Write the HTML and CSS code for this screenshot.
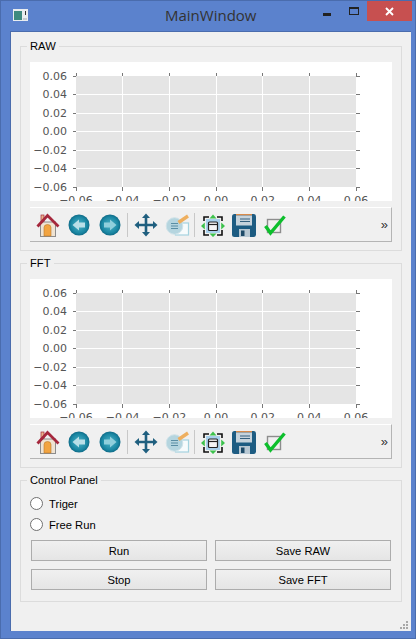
FILE: index.html
```html
<!DOCTYPE html>
<html lang="en">
<head>
    <meta charset="UTF-8">
    <meta name="viewport" content="width=device-width, initial-scale=1.0">
    <title>MainWindow</title>
    <link rel="stylesheet" href="styles.css">
</head>
<body>

<!-- Shared toolbar icons, 24x24 -->
<svg class="icon-defs" aria-hidden="true">
    <defs>
        <radialGradient id="ball" cx="0.5" cy="0.5" r="0.55">
            <stop offset="0" stop-color="#4fb4c8"/>
            <stop offset="0.7" stop-color="#1a87a3"/>
            <stop offset="1" stop-color="#0b5f7c"/>
        </radialGradient>
        <symbol id="i-home" viewBox="0 0 24 24">
            <rect x="5" y="2" width="3" height="8" fill="#e8b48c" stroke="#a8283a" stroke-width="0.7"/>
            <rect x="4.5" y="9" width="15" height="14.5" fill="#efe3d2" stroke="#8c8c8c"/>
            <path d="M8 23V14.5a3.5 3 0 0 1 7 0V23z" fill="#f2a440" stroke="#b87a2c" stroke-width="0.6"/>
            <path d="M1.5 13.5L11.5 2.5L22.5 13.5" fill="none" stroke="#a5273c" stroke-width="2.8"/>
        </symbol>
        <symbol id="i-back" viewBox="0 0 24 24">
            <circle cx="12" cy="12" r="10.5" fill="url(#ball)"/>
            <path d="M5.5 12L12 6.5V9.5H18V14.5H12V17.5z" fill="#b9dfe8"/>
        </symbol>
        <symbol id="i-forward" viewBox="0 0 24 24">
            <circle cx="12" cy="12" r="10.5" fill="url(#ball)"/>
            <path d="M18.5 12L12 6.5V9.5H6V14.5H12V17.5z" fill="#8fcfdc"/>
        </symbol>
        <symbol id="i-move" viewBox="0 0 24 24">
            <path d="M12 3V21M3 12H21" stroke="#1f5f7f" stroke-width="2.6" fill="none"/>
            <path d="M12 0.5L16 5H8zM12 23.5L16 19H8zM0.5 12L5 8V16zM23.5 12L19 8V16z" fill="#1f5f7f"/>
        </symbol>
        <symbol id="i-options" viewBox="0 0 26 24">
            <rect x="11.5" y="10" width="13" height="12" fill="#f7fbfc" stroke="#a5d3df" stroke-width="1.2"/>
            <circle cx="10.5" cy="13" r="8.3" fill="#b5d5df" stroke="#d0e3e9"/>
            <path d="M7 10.5H14M7 13H14M7 15.5H14" stroke="#5a8ea4" stroke-width="1.2"/>
            <path d="M14.5 9.5L24 3" stroke="#eeaf5f" stroke-width="3.4"/>
        </symbol>
        <symbol id="i-subplots" viewBox="0 0 24 24">
            <rect x="5" y="6" width="14" height="14" fill="#a8d0ec"/>
            <path d="M3 8V4H8M16 4H21V8M21 17V22H16M8 22H3V17" fill="none" stroke="#111" stroke-width="1.6"/>
            <rect x="7.5" y="9" width="9" height="8.5" rx="1" fill="#f4f4f4" stroke="#222" stroke-width="1.2"/>
            <path d="M8 11.5H16" stroke="#222" stroke-width="1.2"/>
            <path d="M12 1.5L15.5 5.5H8.5zM12 24L15.5 20.5H8.5zM0 13L3.8 9.5V16.5zM24 13L20.2 9.5V16.5z" fill="#3cc24c"/>
        </symbol>
        <symbol id="i-save" viewBox="0 0 24 24">
            <rect y="1" width="24" height="23" rx="2.5" fill="#1d5c82"/>
            <rect x="4" y="1" width="16" height="1.5" fill="#d98a4a"/>
            <rect x="4" y="2.5" width="16" height="10" fill="#c6d3dc"/>
            <path d="M8 6H18M8 8.5H18" stroke="#34607e" stroke-width="1.2"/>
            <rect x="7" y="16" width="11" height="8" fill="#b8c8d3"/>
            <rect x="9" y="17.5" width="3.5" height="5.5" fill="#1d4a68"/>
        </symbol>
        <symbol id="i-check" viewBox="0 0 24 24">
            <rect x="4.5" y="6.5" width="13" height="13" fill="#f0f0f0" stroke="#8d8d8d" stroke-width="1.4"/>
            <path d="M2.5 13L7.5 20L21.5 3.5" fill="none" stroke="#0dbf2c" stroke-width="3.4"/>
        </symbol>
    </defs>
</svg>

<div class="window">
    <!-- Title bar -->
    <header class="titlebar">
        <svg class="app-icon" viewBox="0 0 15 12" aria-hidden="true">
            <rect width="15" height="12" fill="#e9edf0"/>
            <rect x="1" y="2" width="8" height="9" fill="#3d8a80"/>
            <rect x="10" y="9" width="4" height="2" fill="#c4cad0"/>
            <rect x="12" y="2" width="1" height="4" fill="#333"/>
        </svg>
        <h1 class="title">MainWindow</h1>
        <span class="win-min"></span>
        <span class="win-max"></span>
        <span class="win-close">
            <svg viewBox="0 0 9 9" aria-hidden="true"><path d="M1 1L8 8M8 1L1 8" stroke="#fff" stroke-width="1.9"/></svg>
        </span>
    </header>

    <main class="content">
        <fieldset class="group plot-group">
            <legend>RAW</legend>
            <svg class="plot" viewBox="0 0 362 139" role="img" aria-label="RAW plot">
                <rect x="46" y="14" width="280" height="111" fill="#e5e5e5"/>
                <path class="grid" d="M92.5 14V125M139.5 14V125M186.5 14V125M232.5 14V125M279.5 14V125M46 32.5H326M46 51.5H326M46 69.5H326M46 88.5H326M46 106.5H326"/>
                <path class="ticks" d="M46 10.5V14M92.5 10.5V14M139.5 10.5V14M186.5 10.5V14M232.5 10.5V14M279.5 10.5V14M326 10.5V14M46 125V128.5M92.5 125V128.5M139.5 125V128.5M186.5 125V128.5M232.5 125V128.5M279.5 125V128.5M326 125V128.5M42.5 14H46M42.5 32.5H46M42.5 51.5H46M42.5 69.5H46M42.5 88.5H46M42.5 106.5H46M42.5 125H46M326 14H329.5M326 32.5H329.5M326 51.5H329.5M326 69.5H329.5M326 88.5H329.5M326 106.5H329.5M326 125H329.5"/>
                <g class="ylabels">
                    <text x="37" y="17.5">0.06</text>
                    <text x="37" y="36">0.04</text>
                    <text x="37" y="54.5">0.02</text>
                    <text x="37" y="73">0.00</text>
                    <text x="37" y="91.5">−0.02</text>
                    <text x="37" y="110">−0.04</text>
                    <text x="37" y="128.5">−0.06</text>
                </g>
                <g class="xlabels">
                    <text x="46" y="142">−0.06</text>
                    <text x="92.7" y="142">−0.04</text>
                    <text x="139.3" y="142">−0.02</text>
                    <text x="186" y="142">0.00</text>
                    <text x="232.7" y="142">0.02</text>
                    <text x="279.3" y="142">0.04</text>
                    <text x="326" y="142">0.06</text>
                </g>
            </svg>
            <div class="toolbar">
                <span class="tool"><svg><use href="#i-home"/></svg></span>
                <span class="tool"><svg><use href="#i-back"/></svg></span>
                <span class="tool"><svg><use href="#i-forward"/></svg></span>
                <span class="tool-sep"></span>
                <span class="tool"><svg><use href="#i-move"/></svg></span>
                <span class="tool"><svg class="wide"><use href="#i-options"/></svg></span>
                <span class="tool-sep"></span>
                <span class="tool"><svg><use href="#i-subplots"/></svg></span>
                <span class="tool"><svg><use href="#i-save"/></svg></span>
                <span class="tool"><svg><use href="#i-check"/></svg></span>
                <span class="tool-more">»</span>
            </div>
        </fieldset>

        <fieldset class="group plot-group">
            <legend>FFT</legend>
            <svg class="plot" viewBox="0 0 362 139" role="img" aria-label="FFT plot">
                <rect x="46" y="14" width="280" height="111" fill="#e5e5e5"/>
                <path class="grid" d="M92.5 14V125M139.5 14V125M186.5 14V125M232.5 14V125M279.5 14V125M46 32.5H326M46 51.5H326M46 69.5H326M46 88.5H326M46 106.5H326"/>
                <path class="ticks" d="M46 10.5V14M92.5 10.5V14M139.5 10.5V14M186.5 10.5V14M232.5 10.5V14M279.5 10.5V14M326 10.5V14M46 125V128.5M92.5 125V128.5M139.5 125V128.5M186.5 125V128.5M232.5 125V128.5M279.5 125V128.5M326 125V128.5M42.5 14H46M42.5 32.5H46M42.5 51.5H46M42.5 69.5H46M42.5 88.5H46M42.5 106.5H46M42.5 125H46M326 14H329.5M326 32.5H329.5M326 51.5H329.5M326 69.5H329.5M326 88.5H329.5M326 106.5H329.5M326 125H329.5"/>
                <g class="ylabels">
                    <text x="37" y="17.5">0.06</text>
                    <text x="37" y="36">0.04</text>
                    <text x="37" y="54.5">0.02</text>
                    <text x="37" y="73">0.00</text>
                    <text x="37" y="91.5">−0.02</text>
                    <text x="37" y="110">−0.04</text>
                    <text x="37" y="128.5">−0.06</text>
                </g>
                <g class="xlabels">
                    <text x="46" y="142">−0.06</text>
                    <text x="92.7" y="142">−0.04</text>
                    <text x="139.3" y="142">−0.02</text>
                    <text x="186" y="142">0.00</text>
                    <text x="232.7" y="142">0.02</text>
                    <text x="279.3" y="142">0.04</text>
                    <text x="326" y="142">0.06</text>
                </g>
            </svg>
            <div class="toolbar">
                <span class="tool"><svg><use href="#i-home"/></svg></span>
                <span class="tool"><svg><use href="#i-back"/></svg></span>
                <span class="tool"><svg><use href="#i-forward"/></svg></span>
                <span class="tool-sep"></span>
                <span class="tool"><svg><use href="#i-move"/></svg></span>
                <span class="tool"><svg class="wide"><use href="#i-options"/></svg></span>
                <span class="tool-sep"></span>
                <span class="tool"><svg><use href="#i-subplots"/></svg></span>
                <span class="tool"><svg><use href="#i-save"/></svg></span>
                <span class="tool"><svg><use href="#i-check"/></svg></span>
                <span class="tool-more">»</span>
            </div>
        </fieldset>

        <fieldset class="group control-group">
            <legend>Control Panel</legend>
            <label class="radio"><span class="radio-dot"></span>Triger</label>
            <label class="radio"><span class="radio-dot"></span>Free Run</label>
            <div class="button-grid">
                <button>Run</button>
                <button>Save RAW</button>
                <button>Stop</button>
                <button>Save FFT</button>
            </div>
        </fieldset>

        <svg class="grip" viewBox="0 0 8 8" aria-hidden="true">
            <path d="M6 0h2v2H6zM3 3h2v2H3zM6 3h2v2H6zM0 6h2v2H0zM3 6h2v2H3zM6 6h2v2H6z" fill="#a8a8a8"/>
        </svg>
    </main>
</div>

</body>
</html>
```

FILE: styles.css
```css
body {
    margin: 0;
    font-family: "Liberation Sans", Arial, sans-serif;
    font-size: 11.2px;
    color: #000;
}
.icon-defs {
    position: absolute;
    width: 0;
    height: 0;
}
.window {
    box-sizing: border-box;
    width: 416px;
    height: 639px;
    background-color: #5b82cd;
    border: 1px solid #4a6cad;
    overflow: hidden;
}

/* Title bar */
.titlebar {
    display: flex;
    align-items: flex-start;
    height: 30px;
    position: relative;
}
.app-icon {
    width: 15px;
    height: 12px;
    margin: 8px 0 0 12px;
}
.title {
    position: absolute;
    left: 164px;
    top: 4px;
    margin: 0;
    font-family: "Open Sans", sans-serif;
    font-size: 15px;
    font-weight: 400;
    line-height: 20px;
    color: #333;
}
.win-min {
    width: 8px;
    height: 3px;
    margin: 12px 0 0 295px;
    background-color: #222;
}
.win-max {
    box-sizing: border-box;
    width: 10px;
    height: 8px;
    margin: 6px 0 0 18px;
    border: 1px solid #222;
    border-top-width: 2px;
}
.win-close {
    display: flex;
    align-items: center;
    justify-content: center;
    width: 45px;
    height: 20px;
    margin-left: 8px;
    background-color: #c75050;
}
.win-close svg {
    width: 9px;
    height: 9px;
}

/* Central widget */
.content {
    box-sizing: border-box;
    position: relative;
    height: 600px;
    margin: 0 4px 0 9px;
    padding: 7px 9px 0 9px;
    background-color: #f0f0f0;
    border: 1px solid #4a6cad;
    border-width: 1px 0 0 1px;
}
.group {
    box-sizing: border-box;
    margin: 0 0 5px;
    padding: 0;
    border: 1px solid #dcdcdc;
    min-width: 0;
}
.group legend {
    margin-left: -3px;
    padding: 0 3px;
    line-height: 14px;
}
.plot-group {
    height: 212px;
    padding: 9px 9px 0;
}
.plot {
    display: block;
    width: 362px;
    height: 139px;
    background-color: #fff;
}
.grid {
    stroke: #fff;
    stroke-width: 1;
    fill: none;
    shape-rendering: crispEdges;
}
.ticks {
    stroke: #777;
    stroke-width: 1;
    fill: none;
    shape-rendering: crispEdges;
}
.plot text {
    font-family: "DejaVu Sans", sans-serif;
    font-size: 11px;
    fill: #555;
}
.ylabels text {
    text-anchor: end;
}
.xlabels text {
    text-anchor: middle;
}

/* Navigation toolbar */
.toolbar {
    box-sizing: border-box;
    display: flex;
    align-items: center;
    width: 362px;
    height: 35px;
    margin-top: 6px;
    padding-left: 2px;
    background-color: #f0f0f0;
    border-top: 1px solid #fff;
    border-right: 1px solid #b4b4b4;
    border-bottom: 1px solid #b4b4b4;
}
.tool {
    display: flex;
    justify-content: center;
    width: 31px;
}
.tool svg {
    width: 24px;
    height: 24px;
}
.tool svg.wide {
    width: 26px;
}
.tool-sep {
    width: 1px;
    height: 24px;
    margin: 0 2px;
    background-color: #c8c8c8;
}
.tool-more {
    margin-left: auto;
    margin-right: 3px;
    font-size: 13px;
    color: #333;
}

/* Control panel */
.control-group {
    height: 129px;
    padding: 0 10px;
}
.control-group legend {
    margin-left: -4px;
}
.radio {
    display: flex;
    align-items: center;
    gap: 6px;
    height: 21px;
    margin-left: -1px;
}
.radio:first-of-type {
    margin-top: 6px;
}
.radio-dot {
    box-sizing: border-box;
    width: 13px;
    height: 13px;
    border: 1px solid #707070;
    border-radius: 50%;
    background-color: #fff;
}
.button-grid {
    display: grid;
    grid-template-columns: 176px 176px;
    grid-auto-rows: 21px;
    column-gap: 8px;
    row-gap: 8px;
    margin-top: 5px;
}
.button-grid button {
    padding: 0;
    font: inherit;
    color: #000;
    background: linear-gradient(#f0f0f0, #e5e5e5);
    border: 1px solid #acacac;
}
.grip {
    position: absolute;
    right: 3px;
    bottom: 2px;
    width: 8px;
    height: 8px;
}
```
